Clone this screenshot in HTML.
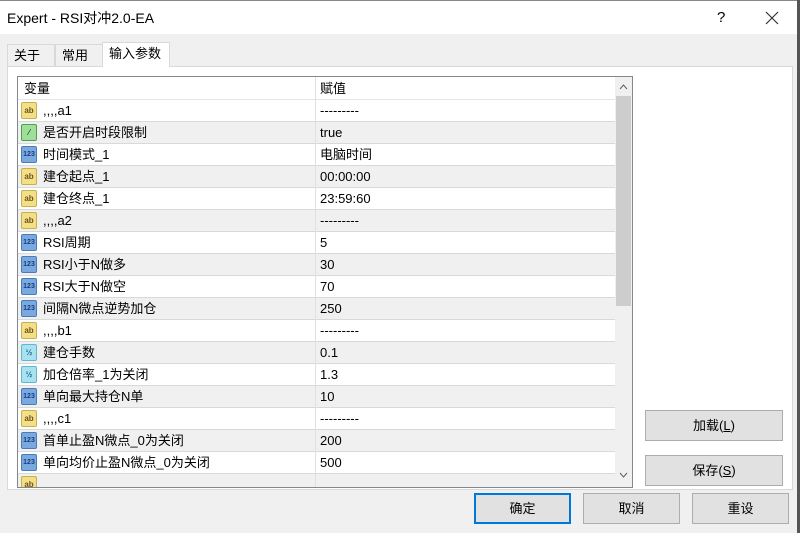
<!DOCTYPE html>
<html><head><meta charset="utf-8"><style>
*{margin:0;padding:0;box-sizing:border-box}
body{width:800px;height:533px;background:#f0f0f0;font-family:"Liberation Sans","Noto Sans CJK SC",sans-serif;font-size:12px;color:#000;position:relative;overflow:hidden}
span,div{line-height:normal}
.title{position:absolute;left:0;top:0;width:797px;height:34px;background:#fff;border-top:1px solid #888}
.title .t{position:absolute;left:7px;top:0;font-size:14px;line-height:34px}
.rb{position:absolute;right:0;top:0;width:3px;height:533px;background:#555}
.tab{position:absolute;top:44px;height:23px;font-size:13px;line-height:21px;padding:0 6px;border:1px solid #d9d9d9;border-bottom:none;background:#f0f0f0}
.panel{position:absolute;left:7px;top:66px;width:786px;height:424px;background:#fff;border:1px solid #d9d9d9}
.list{position:absolute;left:17px;top:76px;width:616px;height:412px;border:1px solid #828790;background:#fff;overflow:hidden}
.hdr{position:absolute;left:0;top:0;width:597px;height:23px;border-bottom:1px solid #e5e5e5;font-size:13px}
.hdr span{position:absolute;top:0;line-height:23px}
.row{position:absolute;left:0;width:597px;height:22px;border-bottom:1px solid #d9d9d9;font-size:13px}
.row.g{background:#f0f0f0}
.row .n{position:absolute;left:25px;top:0;line-height:21px;height:21px}
.row .v{position:absolute;left:302px;top:0;line-height:21px;height:21px}
.col{position:absolute;left:297px;top:0;width:1px;height:412px;background:#e0e0e0}
.ic{position:absolute;left:3px;top:2px;width:16px;height:17px;border-radius:2px;font-size:8px;font-weight:bold;text-align:center;line-height:15px;border:1px solid}
.ab{background:#f3df86;border-color:#c8b050;color:#705020}
.n3{background:#79a9de;border-color:#4a7cb8;color:#1a3a80;font-size:7px}
.hf{background:#a8e2f0;border-color:#60b8d0;color:#1a6a90}
.bo{background:#9ee09a;border-color:#50a050;color:#205020}
.sb{position:absolute;left:597px;top:0;width:17px;height:410px;background:#f0f0f0}
.th{position:absolute;left:1px;top:19px;width:15px;height:210px;background:#cdcdcd}
.btn{position:absolute;height:31px;background:#e1e1e1;border:1px solid #adadad;font-size:13px;text-align:center;line-height:29px}
</style></head><body>
<div class="title"><span class="t">Expert - RSI对冲2.0-EA</span>
<span class="t" style="left:717px;font-size:15px">?</span>
<svg style="position:absolute;left:765px;top:10px" width="14" height="14"><path d="M1 1L13 13M13 1L1 13" stroke="#333" stroke-width="1.2"/></svg></div>
<div class="rb"></div>
<div class="tab" style="left:7px;width:48px">关于</div>
<div class="tab" style="left:55px;width:48px">常用</div>
<div class="panel"></div>
<div class="tab" style="left:102px;top:42px;width:68px;height:25px;background:#fff;z-index:2">输入参数</div>
<div class="list">
<div class="hdr"><span style="left:6px">变量</span><span style="left:302px">赋值</span></div>
<div class="row" style="top:23px"><div class="ic ab">ab</div><span class="n">,,,,a1</span><span class="v">---------</span></div>
<div class="row g" style="top:45px"><div class="ic bo">⁄</div><span class="n">是否开启时段限制</span><span class="v">true</span></div>
<div class="row" style="top:67px"><div class="ic n3">123</div><span class="n">时间模式_1</span><span class="v">电脑时间</span></div>
<div class="row g" style="top:89px"><div class="ic ab">ab</div><span class="n">建仓起点_1</span><span class="v">00:00:00</span></div>
<div class="row" style="top:111px"><div class="ic ab">ab</div><span class="n">建仓终点_1</span><span class="v">23:59:60</span></div>
<div class="row g" style="top:133px"><div class="ic ab">ab</div><span class="n">,,,,a2</span><span class="v">---------</span></div>
<div class="row" style="top:155px"><div class="ic n3">123</div><span class="n">RSI周期</span><span class="v">5</span></div>
<div class="row g" style="top:177px"><div class="ic n3">123</div><span class="n">RSI小于N做多</span><span class="v">30</span></div>
<div class="row" style="top:199px"><div class="ic n3">123</div><span class="n">RSI大于N做空</span><span class="v">70</span></div>
<div class="row g" style="top:221px"><div class="ic n3">123</div><span class="n">间隔N微点逆势加仓</span><span class="v">250</span></div>
<div class="row" style="top:243px"><div class="ic ab">ab</div><span class="n">,,,,b1</span><span class="v">---------</span></div>
<div class="row g" style="top:265px"><div class="ic hf">½</div><span class="n">建仓手数</span><span class="v">0.1</span></div>
<div class="row" style="top:287px"><div class="ic hf">½</div><span class="n">加仓倍率_1为关闭</span><span class="v">1.3</span></div>
<div class="row g" style="top:309px"><div class="ic n3">123</div><span class="n">单向最大持仓N单</span><span class="v">10</span></div>
<div class="row" style="top:331px"><div class="ic ab">ab</div><span class="n">,,,,c1</span><span class="v">---------</span></div>
<div class="row g" style="top:353px"><div class="ic n3">123</div><span class="n">首单止盈N微点_0为关闭</span><span class="v">200</span></div>
<div class="row" style="top:375px"><div class="ic n3">123</div><span class="n">单向均价止盈N微点_0为关闭</span><span class="v">500</span></div>
<div class="row g" style="top:397px"><div class="ic ab">ab</div></div>
<div class="col"></div>
<div class="sb"><svg style="position:absolute;left:4px;top:7px" width="9" height="6"><path d="M1 5L4.5 1L8 5" stroke="#606060" fill="none"/></svg><div class="th"></div><svg style="position:absolute;left:4px;top:395px" width="9" height="6"><path d="M1 1L4.5 5L8 1" stroke="#606060" fill="none"/></svg></div>
</div>
<div class="btn" style="left:645px;top:410px;width:138px">加载(<u>L</u>)</div>
<div class="btn" style="left:645px;top:455px;width:138px">保存(<u>S</u>)</div>
<div class="btn" style="left:474px;top:493px;width:97px;border:2px solid #0078d7;line-height:27px">确定</div>
<div class="btn" style="left:583px;top:493px;width:97px">取消</div>
<div class="btn" style="left:692px;top:493px;width:97px">重设</div>
</body></html>
